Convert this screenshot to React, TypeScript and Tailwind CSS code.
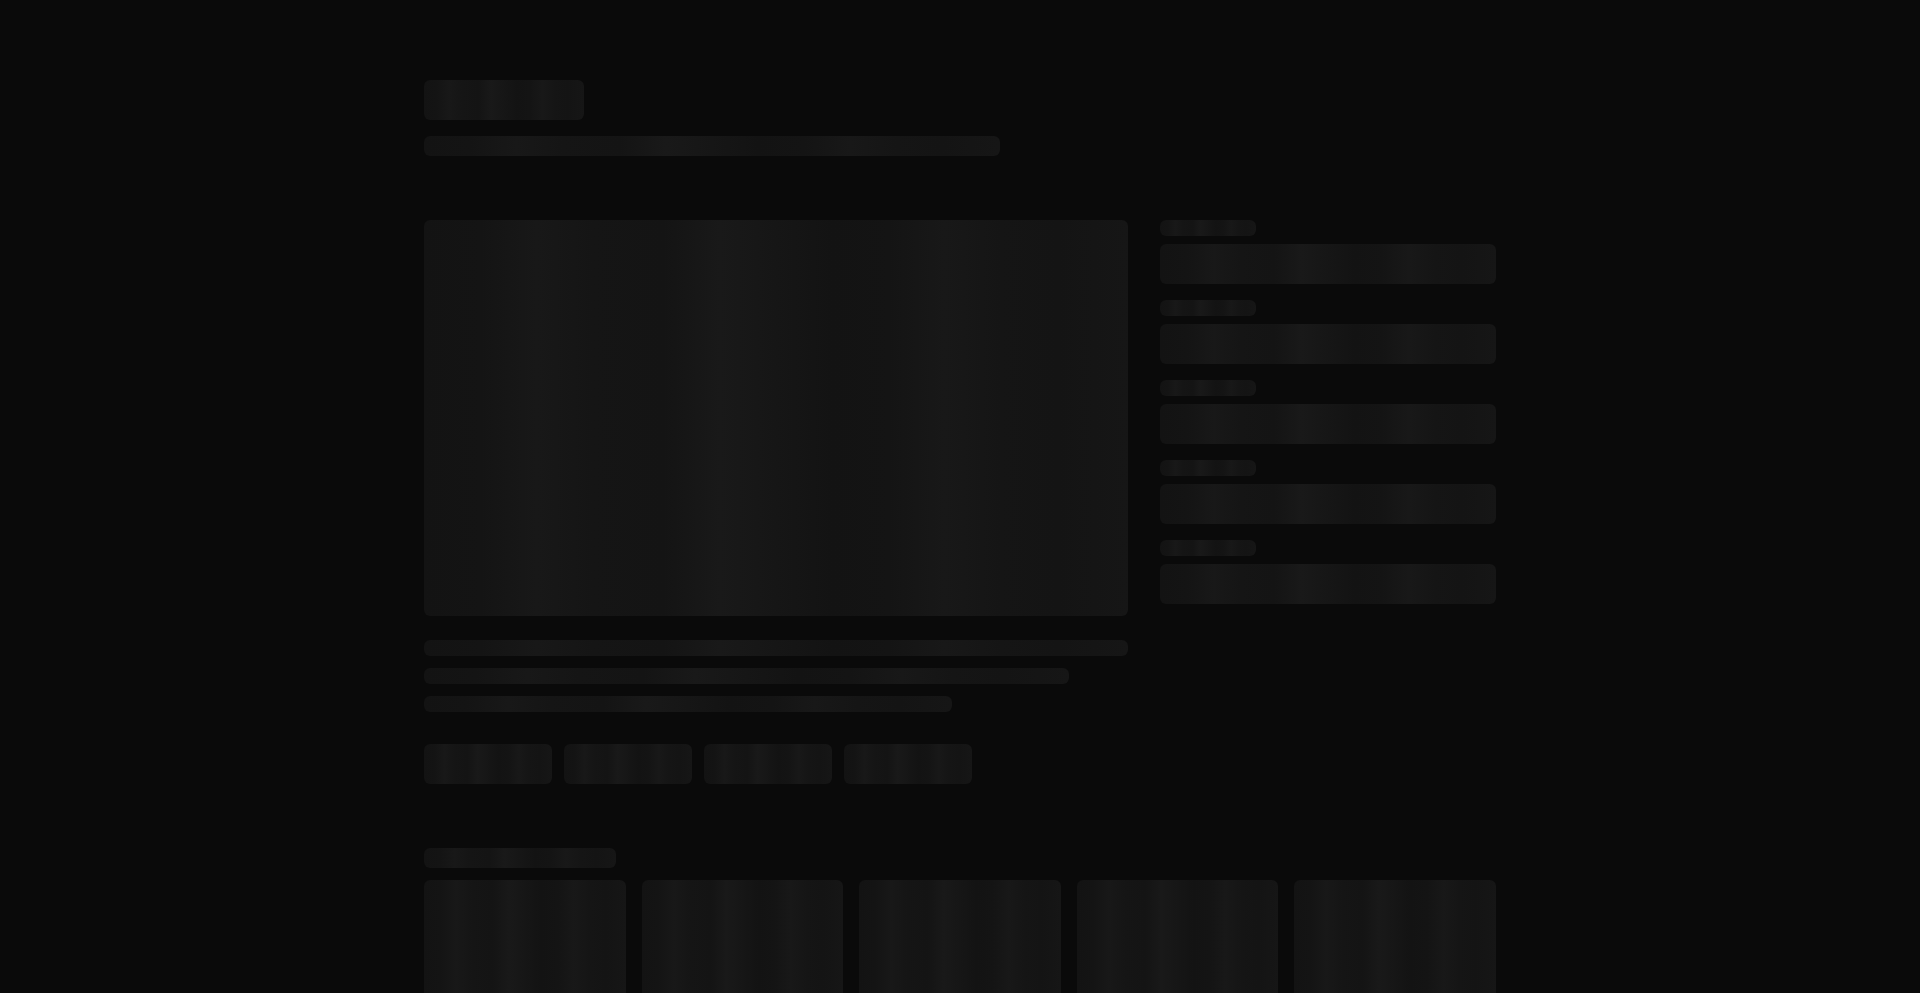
const shimmer =
  'bg-[#141414] bg-[linear-gradient(90deg,#131313_0%,#141414_8%,#181818_16%,#151515_24%,#141414_34%,#191919_42%,#161616_50%,#131313_58%,#141414_66%,#181818_74%,#151515_82%,#141414_90%,#161616_100%)]'

function Skeleton({ className = '' }: { className?: string }) {
  return <div className={`${shimmer} ${className}`} />
}

export default function App() {
  return (
    <div className="min-h-screen overflow-hidden bg-[#0a0a0a]">
      <div className="mx-auto max-w-6xl px-10 py-20 blur-[0.6px]">
        {/* header */}
        <Skeleton className="h-10 w-40 rounded-md" />
        <Skeleton className="mt-4 h-5 w-[576px] rounded-md" />

        {/* main + sidebar */}
        <div className="mt-16 grid grid-cols-3 gap-8">
          <div className="col-span-2">
            <Skeleton className="aspect-video w-full rounded-md" />

            <div className="mt-6 flex flex-col gap-3">
              <Skeleton className="h-4 w-full rounded-md" />
              <Skeleton className="h-4 w-11/12 rounded-md" />
              <Skeleton className="h-4 w-3/4 rounded-md" />
            </div>

            <div className="mt-8 flex gap-3">
              {[0, 1, 2, 3].map((i) => (
                <Skeleton key={i} className="h-10 w-32 rounded-md" />
              ))}
            </div>
          </div>

          <div className="flex flex-col gap-4">
            {[0, 1, 2, 3, 4].map((i) => (
              <div key={i}>
                <Skeleton className="h-4 w-24 rounded-md" />
                <Skeleton className="mt-2 h-10 w-full rounded-md" />
              </div>
            ))}
          </div>
        </div>

        {/* related */}
        <div className="mt-16">
          <Skeleton className="mb-3 h-5 w-48 rounded-md" />
          <div className="grid grid-cols-5 gap-4">
            {[0, 1, 2, 3, 4].map((i) => (
              <Skeleton key={i} className="aspect-[2/3] w-full rounded-md" />
            ))}
          </div>
        </div>
      </div>
    </div>
  )
}
